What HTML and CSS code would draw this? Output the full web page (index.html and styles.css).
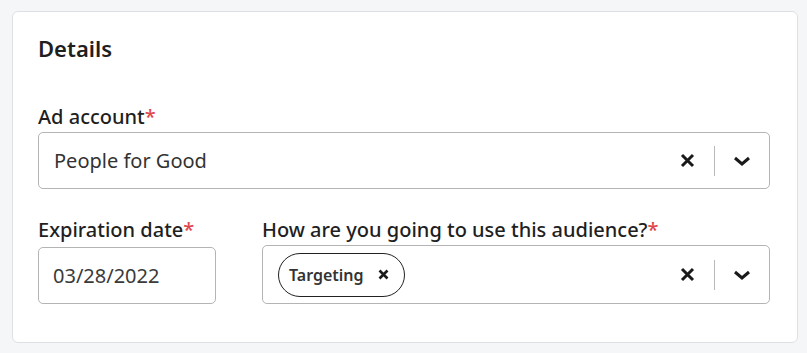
FILE: index.html
```html
<!DOCTYPE html>
<html lang="en">
<head>
<meta charset="UTF-8">
<title>Details</title>
<link rel="stylesheet" href="styles.css">
</head>
<body>
<div class="card">
  <h2 class="title">Details</h2>

  <div class="field">
    <label class="label">Ad account<span class="req">*</span></label>
    <div class="select">
      <div class="value">People for Good</div>
      <div class="controls">
        <svg class="clear" width="15" height="15" viewBox="0 0 15 15"><path d="M2 2 L13 13 M13 2 L2 13"/></svg>
        <span class="sep"></span>
        <svg class="chev" width="18" height="10" viewBox="0 0 18 10"><polyline points="2,2 9,8 16,2"/></svg>
      </div>
    </div>
  </div>

  <div class="row">
    <div class="field">
      <label class="label">Expiration date<span class="req">*</span></label>
      <div class="date">03/28/2022</div>
    </div>
    <div class="field">
      <label class="label">How are you going to use this audience?<span class="req">*</span></label>
      <div class="select multi">
        <div class="value">
          <span class="tag">Targeting
            <svg class="tag-x" width="11" height="11" viewBox="0 0 11 11"><path d="M1.5 1.5 L9.5 9.5 M9.5 1.5 L1.5 9.5"/></svg>
          </span>
        </div>
        <div class="controls">
          <svg class="clear" width="15" height="15" viewBox="0 0 15 15"><path d="M2 2 L13 13 M13 2 L2 13"/></svg>
          <span class="sep"></span>
          <svg class="chev" width="18" height="10" viewBox="0 0 18 10"><polyline points="2,2 9,8 16,2"/></svg>
        </div>
      </div>
    </div>
  </div>
</div>
</body>
</html>
```

FILE: styles.css
```css
body {
  margin: 0;
  padding: 11px 9px 10px 12px;
  background: #f5f6f8;
  font-family: "Noto Sans", "Open Sans", sans-serif;
  color: #1f1f1f;
}
.card {
  background: #fff;
  border: 1px solid #dde0e4;
  border-radius: 6px;
  padding: 21px 27px 38px 25px;
}
.title {
  margin: 0 0 41px 0;
  font-size: 22px;
  font-weight: 600;
  line-height: 30px;
}
.field {
  display: flex;
  flex-direction: column;
}
.label {
  font-size: 20px;
  font-weight: 500;
  line-height: 26px;
  margin-bottom: 2px;
  white-space: nowrap;
}
.req {
  color: #e0474c;
}
.select {
  display: flex;
  align-items: center;
  height: 55px;
  border: 1px solid #b4b4b4;
  border-radius: 5px;
  padding: 0 18px 0 15px;
}
.select .value {
  flex: 1;
  font-size: 20px;
  color: #333;
}
.controls {
  display: flex;
  align-items: center;
}
.clear path {
  stroke: #1a1a1a;
  stroke-width: 3;
  fill: none;
}
.chev polyline {
  stroke: #1a1a1a;
  stroke-width: 3;
  fill: none;
}
.sep {
  width: 1px;
  height: 30px;
  background: #b9b9b9;
  margin: 0 18px 0 19px;
}
.row {
  display: grid;
  grid-template-columns: 178px 1fr;
  column-gap: 46px;
  margin-top: 28px;
}
.date {
  height: 55px;
  border: 1px solid #b4b4b4;
  border-radius: 5px;
  font-size: 20px;
  color: #3a3a3a;
  padding-left: 14px;
  display: flex;
  align-items: center;
  margin-top: 2px;
}
.multi {
  height: 57px;
  padding-left: 15px;
}
.tag {
  display: inline-flex;
  align-items: center;
  height: 42px;
  padding: 0 15px 0 10px;
  border: 1px solid #222;
  border-radius: 22px;
  font-size: 16px;
  font-weight: 600;
  color: #333;
}
.tag-x {
  margin-left: 14px;
}
.tag-x path {
  stroke: #1a1a1a;
  stroke-width: 2.6;
  fill: none;
}
```
